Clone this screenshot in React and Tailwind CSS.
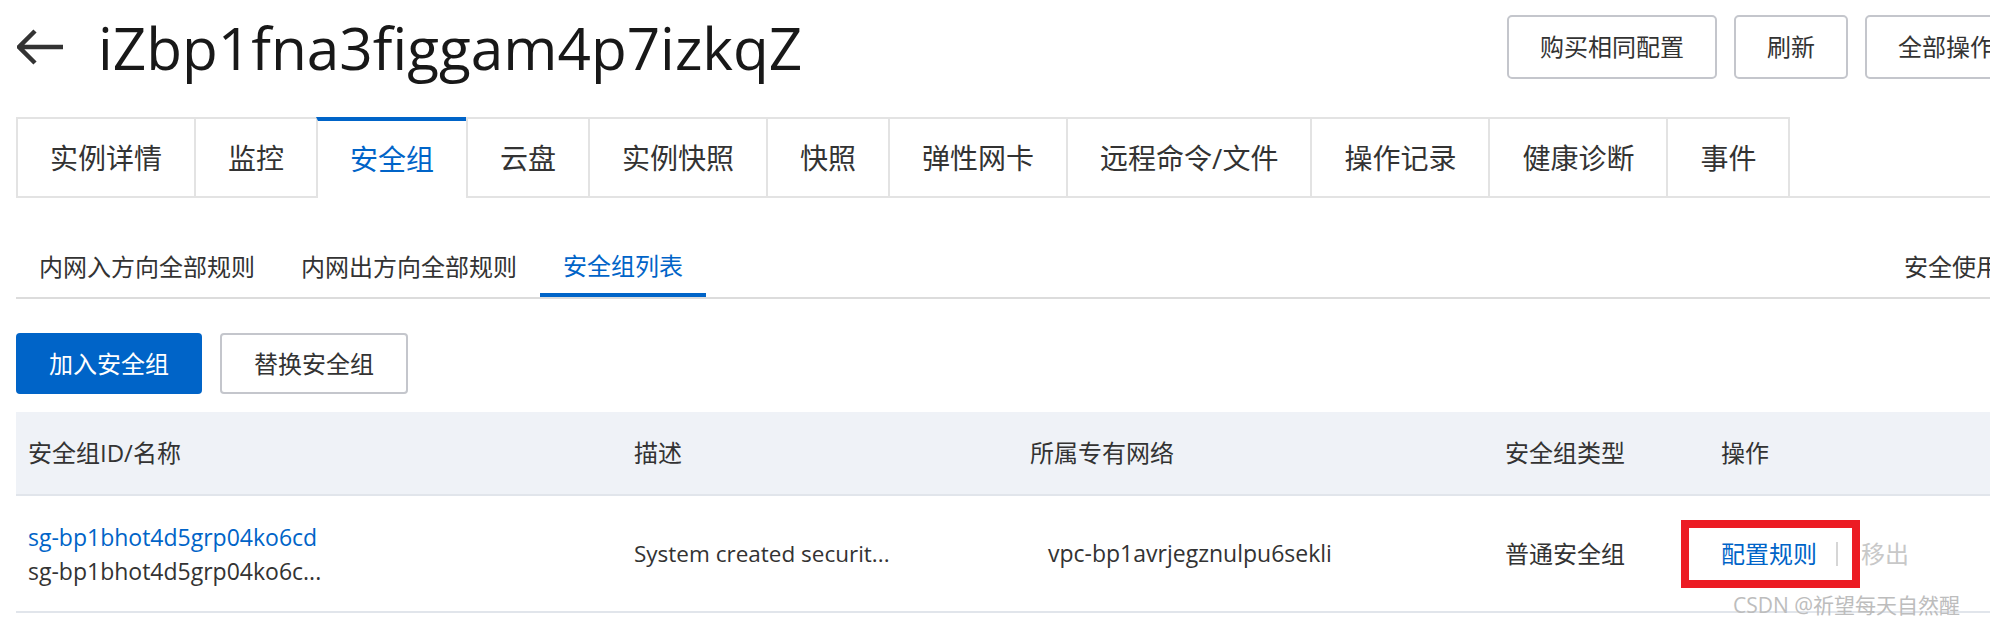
import React from "react";

const FONT = { fontFamily: '"Open Sans", "Noto Sans CJK SC", sans-serif' };

const tabs = ["实例详情", "监控", "安全组", "云盘", "实例快照", "快照", "弹性网卡", "远程命令/文件", "操作记录", "健康诊断", "事件"];
const subTabs = ["内网入方向全部规则", "内网出方向全部规则", "安全组列表"];

export default function App() {
  return (
    <div className="relative w-[1990px] h-[623px] overflow-hidden bg-white text-[#333]" style={FONT}>
      <div className="w-[2064px] px-4">
        {/* Header */}
        <div className="flex items-center h-[94px]">
          <svg width="48" height="36" viewBox="0 0 48 36" className="ml-[1px] text-[#333]">
            <path d="M2 18 H46 M18 2 L2 18 L18 34" fill="none" stroke="currentColor" strokeWidth="4.5" strokeLinecap="butt" strokeLinejoin="miter" />
          </svg>
          <h1 className="ml-[33px] text-[58.5px] leading-none text-[#181818] font-normal">iZbp1fna3figgam4p7izkqZ</h1>
          <div className="ml-auto flex gap-[17px]">
            <button className="h-[64px] px-[31px] border-2 border-[#c4c6cc] rounded-[5px] bg-white text-[24px] text-[#333]">购买相同配置</button>
            <button className="h-[64px] px-[31px] border-2 border-[#c4c6cc] rounded-[5px] bg-white text-[24px] text-[#333]">刷新</button>
            <button className="h-[64px] px-[31px] border-2 border-[#c4c6cc] rounded-[5px] bg-white text-[24px] text-[#333] w-[183px] text-left">全部操作</button>
          </div>
        </div>

        {/* Tabs */}
        <div className="mt-[23px] flex border-b-2 border-[#e3e3e3]">
          {tabs.map((t, i) => {
            const active = t === "安全组";
            return (
              <div
                key={t}
                className={
                  "h-[79px] px-[32px] flex items-center text-[28px] border-l-2 border-[#e3e3e3] " +
                  (i === tabs.length - 1 ? "border-r-2 " : "") +
                  (active
                    ? "relative z-10 -mb-[2px] h-[81px] pb-[2px] bg-white border-t-4 border-t-[#0064c8] text-[#0064c8]"
                    : "border-t-2 text-[#333]")
                }
              >
                {t}
              </div>
            );
          })}
        </div>

        {/* Sub tabs */}
        <div className="mt-[38px] flex items-stretch border-b-2 border-[#dcdcdc]">
          {subTabs.map((t) => {
            const active = t === "安全组列表";
            return (
              <div
                key={t}
                className={
                  "h-[61px] px-[23px] flex items-center text-[24px] " +
                  (active ? "-mb-[2px] border-b-4 border-[#0064c8] text-[#0064c8] pt-[2px]" : "text-[#333]")
                }
              >
                {t}
              </div>
            );
          })}
          <div className="ml-auto h-[61px] flex items-center text-[24px] text-[#333]">安全使用须知</div>
        </div>

        {/* Action buttons */}
        <div className="mt-[34px] flex gap-[18px]">
          <button className="h-[61px] px-[33px] rounded-[4px] bg-[#0064c8] text-white text-[24px]">加入安全组</button>
          <button className="h-[61px] px-[32px] rounded-[4px] border-2 border-[#c4c6cc] bg-white text-[#333] text-[24px]">替换安全组</button>
        </div>

        {/* Table */}
        <div className="mt-[18px] relative">
          <div className="grid grid-cols-[606px_396px_475px_216px_1fr] h-[84px] bg-[#eff2f7] border-b-2 border-[#e1e5eb] text-[24px] text-[#333] items-center">
            <div className="pl-3">安全组ID/名称</div>
            <div className="pl-3">描述</div>
            <div className="pl-3">所属专有网络</div>
            <div className="pl-3">安全组类型</div>
            <div className="pl-3">操作</div>
          </div>
          <div className="relative grid grid-cols-[606px_396px_475px_216px_1fr] h-[117px] border-b-2 border-[#e1e5eb] text-[24px] items-center">
            <div className="pl-3 leading-[34px] text-[23px]">
              <div className="text-[#0064c8]">sg-bp1bhot4d5grp04ko6cd</div>
              <div className="text-[#333]">sg-bp1bhot4d5grp04ko6c...</div>
            </div>
            <div className="pl-3 text-[#333] text-[22.5px]">System created securit...</div>
            <div className="pl-[30px] text-[#333] text-[23px]">vpc-bp1avrjegznulpu6sekli</div>
            <div className="pl-3 text-[#333]">普通安全组</div>
            <div className="pl-3 flex items-center">
              <span className="text-[#0064c8]">配置规则</span>
              <span className="ml-[19px] mr-[23px] w-[2px] h-[24px] bg-[#d6d6d6]" />
              <span className="text-[#c8c8c8]">移出</span>
            </div>
            <div className="absolute left-[1665px] top-[24px] w-[179px] h-[68px] border-[8px] border-[#ec1c24]" />
          </div>
        </div>
      </div>
      <div className="absolute left-[1733px] top-[591px] text-[21px] leading-[28px] text-[#bdbdbd]">CSDN @祈望每天自然醒</div>
    </div>
  );
}
